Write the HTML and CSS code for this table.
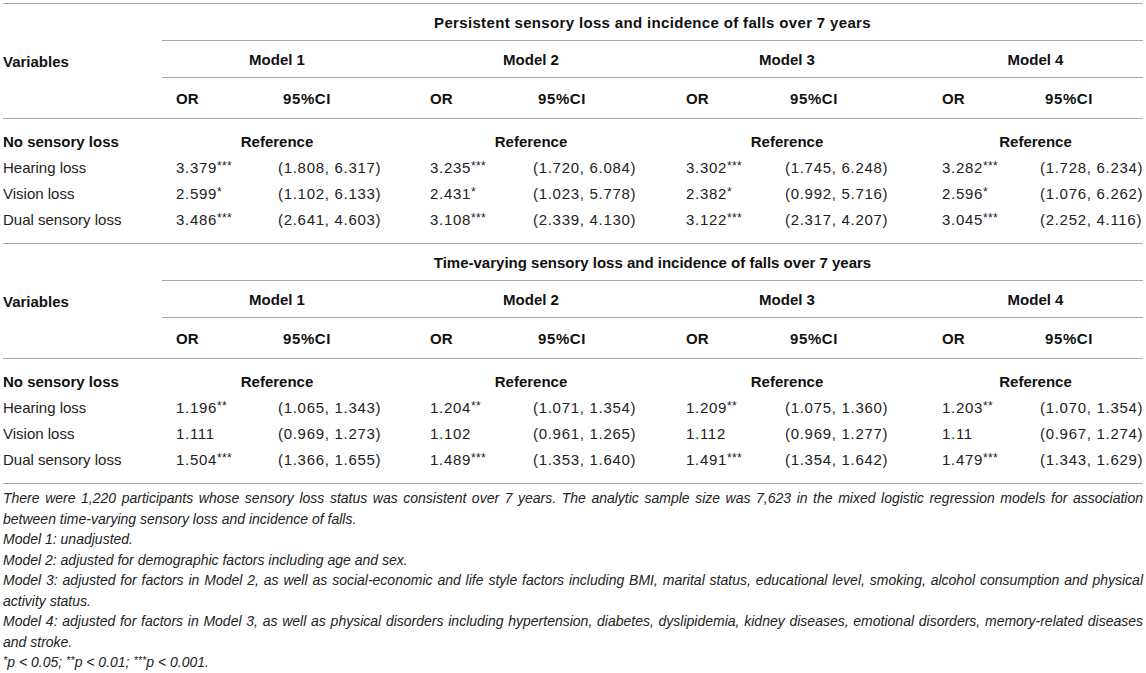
FILE: index.html
```html
<!DOCTYPE html>
<html lang="en">
<head>
<meta charset="utf-8">
<title>Sensory loss and incidence of falls</title>
<link rel="stylesheet" href="styles.css">
</head>
<body>
<div class="page">
  <table class="tbl first">
    <colgroup>
      <col class="c-var"><col class="c-or1"><col class="c-ci1"><col class="c-gap1">
      <col class="c-or2"><col class="c-ci2"><col class="c-gap2">
      <col class="c-or3"><col class="c-ci3"><col class="c-gap3">
      <col class="c-or4"><col class="c-ci4">
    </colgroup>
    <thead>
      <tr class="r-title">
        <th class="var" rowspan="3">Variables</th>
        <th class="title title-wide" colspan="11">Persistent sensory loss and incidence of falls over 7 years</th>
      </tr>
      <tr class="r-model">
        <th colspan="2">Model 1</th><th></th>
        <th colspan="2">Model 2</th><th></th>
        <th colspan="2">Model 3</th><th></th>
        <th colspan="2">Model 4</th>
      </tr>
      <tr class="r-stat">
        <th class="or">OR</th><th class="ci">95%CI</th><th></th>
        <th class="or">OR</th><th class="ci">95%CI</th><th></th>
        <th class="or">OR</th><th class="ci">95%CI</th><th></th>
        <th class="or">OR</th><th class="ci">95%CI</th>
      </tr>
    </thead>
    <tbody>
      <tr class="r-ref">
        <td class="label">No sensory loss</td>
        <td class="ref" colspan="2">Reference</td><td></td>
        <td class="ref" colspan="2">Reference</td><td></td>
        <td class="ref" colspan="2">Reference</td><td></td>
        <td class="ref" colspan="2">Reference</td>
      </tr>
      <tr>
        <td>Hearing loss</td>
        <td class="or">3.379<span class="sig">***</span></td><td class="ci">(1.808, 6.317)</td><td></td>
        <td class="or">3.235<span class="sig">***</span></td><td class="ci">(1.720, 6.084)</td><td></td>
        <td class="or">3.302<span class="sig">***</span></td><td class="ci">(1.745, 6.248)</td><td></td>
        <td class="or">3.282<span class="sig">***</span></td><td class="ci">(1.728, 6.234)</td>
      </tr>
      <tr>
        <td>Vision loss</td>
        <td class="or">2.599<span class="sig">*</span></td><td class="ci">(1.102, 6.133)</td><td></td>
        <td class="or">2.431<span class="sig">*</span></td><td class="ci">(1.023, 5.778)</td><td></td>
        <td class="or">2.382<span class="sig">*</span></td><td class="ci">(0.992, 5.716)</td><td></td>
        <td class="or">2.596<span class="sig">*</span></td><td class="ci">(1.076, 6.262)</td>
      </tr>
      <tr class="r-last">
        <td>Dual sensory loss</td>
        <td class="or">3.486<span class="sig">***</span></td><td class="ci">(2.641, 4.603)</td><td></td>
        <td class="or">3.108<span class="sig">***</span></td><td class="ci">(2.339, 4.130)</td><td></td>
        <td class="or">3.122<span class="sig">***</span></td><td class="ci">(2.317, 4.207)</td><td></td>
        <td class="or">3.045<span class="sig">***</span></td><td class="ci">(2.252, 4.116)</td>
      </tr>
    </tbody>
  </table>

  <table class="tbl second">
    <colgroup>
      <col class="c-var"><col class="c-or1"><col class="c-ci1"><col class="c-gap1">
      <col class="c-or2"><col class="c-ci2"><col class="c-gap2">
      <col class="c-or3"><col class="c-ci3"><col class="c-gap3">
      <col class="c-or4"><col class="c-ci4">
    </colgroup>
    <thead>
      <tr class="r-title">
        <th class="var" rowspan="3">Variables</th>
        <th class="title" colspan="11">Time-varying sensory loss and incidence of falls over 7 years</th>
      </tr>
      <tr class="r-model">
        <th colspan="2">Model 1</th><th></th>
        <th colspan="2">Model 2</th><th></th>
        <th colspan="2">Model 3</th><th></th>
        <th colspan="2">Model 4</th>
      </tr>
      <tr class="r-stat">
        <th class="or">OR</th><th class="ci">95%CI</th><th></th>
        <th class="or">OR</th><th class="ci">95%CI</th><th></th>
        <th class="or">OR</th><th class="ci">95%CI</th><th></th>
        <th class="or">OR</th><th class="ci">95%CI</th>
      </tr>
    </thead>
    <tbody>
      <tr class="r-ref">
        <td class="label">No sensory loss</td>
        <td class="ref" colspan="2">Reference</td><td></td>
        <td class="ref" colspan="2">Reference</td><td></td>
        <td class="ref" colspan="2">Reference</td><td></td>
        <td class="ref" colspan="2">Reference</td>
      </tr>
      <tr>
        <td>Hearing loss</td>
        <td class="or">1.196<span class="sig">**</span></td><td class="ci">(1.065, 1.343)</td><td></td>
        <td class="or">1.204<span class="sig">**</span></td><td class="ci">(1.071, 1.354)</td><td></td>
        <td class="or">1.209<span class="sig">**</span></td><td class="ci">(1.075, 1.360)</td><td></td>
        <td class="or">1.203<span class="sig">**</span></td><td class="ci">(1.070, 1.354)</td>
      </tr>
      <tr>
        <td>Vision loss</td>
        <td class="or">1.111</td><td class="ci">(0.969, 1.273)</td><td></td>
        <td class="or">1.102</td><td class="ci">(0.961, 1.265)</td><td></td>
        <td class="or">1.112</td><td class="ci">(0.969, 1.277)</td><td></td>
        <td class="or">1.11</td><td class="ci">(0.967, 1.274)</td>
      </tr>
      <tr class="r-last">
        <td>Dual sensory loss</td>
        <td class="or">1.504<span class="sig">***</span></td><td class="ci">(1.366, 1.655)</td><td></td>
        <td class="or">1.489<span class="sig">***</span></td><td class="ci">(1.353, 1.640)</td><td></td>
        <td class="or">1.491<span class="sig">***</span></td><td class="ci">(1.354, 1.642)</td><td></td>
        <td class="or">1.479<span class="sig">***</span></td><td class="ci">(1.343, 1.629)</td>
      </tr>
    </tbody>
  </table>

  <div class="notes">
    <p>There were 1,220 participants whose sensory loss status was consistent over 7 years. The analytic sample size was 7,623 in the mixed logistic regression models for association between time-varying sensory loss and incidence of falls.</p>
    <p>Model 1: unadjusted.</p>
    <p>Model 2: adjusted for demographic factors including age and sex.</p>
    <p>Model 3: adjusted for factors in Model 2, as well as social-economic and life style factors including BMI, marital status, educational level, smoking, alcohol consumption and physical activity status.</p>
    <p>Model 4: adjusted for factors in Model 3, as well as physical disorders including hypertension, diabetes, dyslipidemia, kidney diseases, emotional disorders, memory-related diseases and stroke.</p>
    <p><span class="nsig">*</span>p &lt; 0.05; <span class="nsig">**</span>p &lt; 0.01; <span class="nsig">***</span>p &lt; 0.001.</p>
  </div>
</div>
</body>
</html>
```

FILE: styles.css
```css
html, body {
  margin: 0;
  padding: 0;
  background: #ffffff;
}

body {
  font-family: "Liberation Sans", Arial, "Helvetica Neue", sans-serif;
  color: #1c1c1c;
}

.page {
  padding: 3px 3px 0 3px;
  width: 1140px;
}

.tbl {
  width: 1140px;
  border-collapse: collapse;
  table-layout: fixed;
  font-size: 15px;
  border-bottom: 1px solid #a8a8a8;
}

.tbl.first {
  border-top: 1px solid #a8a8a8;
}

.c-var { width: 159px; }
.c-or1 { width: 102px; }
.c-ci1 { width: 128px; }
.c-gap1 { width: 24px; }
.c-or2 { width: 103px; }
.c-ci2 { width: 127px; }
.c-gap2 { width: 26px; }
.c-or3 { width: 99px; }
.c-ci3 { width: 131px; }
.c-gap3 { width: 26px; }
.c-or4 { width: 98px; }
.c-ci4 { width: 117px; }

.tbl th,
.tbl td {
  padding: 0;
  text-align: left;
  vertical-align: middle;
  white-space: nowrap;
}

.tbl th {
  font-weight: bold;
  color: #111111;
}

.tbl td {
  font-weight: normal;
  color: #222222;
}

.tbl th.var {
  border-bottom: 1px solid #a8a8a8;
  text-align: left;
}

.r-title th {
  height: 36px;
  text-align: center;
  border-bottom: 1px solid #a8a8a8;
}

.r-title th.title-wide {
  letter-spacing: 0.34px;
}

.r-model th {
  height: 36px;
  text-align: center;
  border-bottom: 1px solid #a8a8a8;
}

.r-stat th {
  height: 40px;
  border-bottom: 1px solid #a8a8a8;
}

.tbl .or {
  padding-left: 14px;
}

.tbl .ci {
  padding-left: 14px;
}

.r-stat th.ci {
  padding-left: 19px;
  letter-spacing: 0.6px;
}

.tbl td.or,
.tbl td.ci {
  letter-spacing: 0.7px;
}

.tbl tbody td {
  line-height: 26px;
}

.tbl tr.r-ref td {
  padding-top: 10px;
  font-weight: bold;
  color: #111111;
}

.tbl td.ref {
  text-align: center;
}

.tbl tr.r-last td {
  padding-bottom: 10px;
}

.sig {
  font-size: 12px;
  vertical-align: 3px;
  line-height: 0;
  letter-spacing: 0.3px;
}

.notes {
  font-size: 14px;
  font-style: italic;
  line-height: 20.5px;
  text-align: justify;
  color: #222222;
  padding-top: 4px;
}

.notes p {
  margin: 0;
}

.nsig {
  font-size: 11px;
  vertical-align: 3px;
  line-height: 0;
}
```
